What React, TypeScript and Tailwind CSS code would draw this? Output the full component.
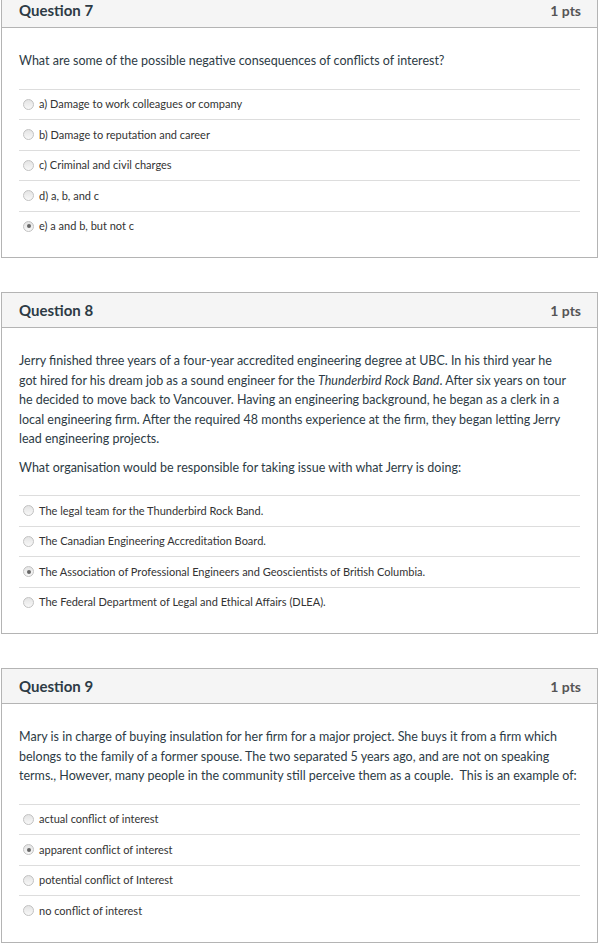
import React from 'react';

interface Question {
  id: number;
  title: string;
  points: string;
  paragraphs: React.ReactNode[];
  answers: string[];
  selected: number;
}

const questions: Question[] = [
  {
    id: 7,
    title: 'Question 7',
    points: '1 pts',
    paragraphs: ['What are some of the possible negative consequences of conflicts of interest?'],
    answers: [
      'a) Damage to work colleagues or company',
      'b) Damage to reputation and career',
      'c) Criminal and civil charges',
      'd) a, b, and c',
      'e) a and b, but not c',
    ],
    selected: 4,
  },
  {
    id: 8,
    title: 'Question 8',
    points: '1 pts',
    paragraphs: [
      <>
        Jerry finished three years of a four-year accredited engineering degree at UBC. In his third year he
        <br />
        got hired for his dream job as a sound engineer for the <em>Thunderbird Rock Band</em>. After six years on tour
        <br />
        he decided to move back to Vancouver. Having an engineering background, he began as a clerk in a
        <br />
        local engineering firm. After the required 48 months experience at the firm, they began letting Jerry
        <br />
        lead engineering projects.
      </>,
      'What organisation would be responsible for taking issue with what Jerry is doing:',
    ],
    answers: [
      'The legal team for the Thunderbird Rock Band.',
      'The Canadian Engineering Accreditation Board.',
      'The Association of Professional Engineers and Geoscientists of British Columbia.',
      'The Federal Department of Legal and Ethical Affairs (DLEA).',
    ],
    selected: 2,
  },
  {
    id: 9,
    title: 'Question 9',
    points: '1 pts',
    paragraphs: [
      'Mary is in charge of buying insulation for her firm for a major project. She buys it from a firm which belongs to the family of a former spouse. The two separated 5 years ago, and are not on speaking terms., However, many people in the community still perceive them as a couple.\u00a0 This is an example of:',
    ],
    answers: [
      'actual conflict of interest',
      'apparent conflict of interest',
      'potential conflict of Interest',
      'no conflict of interest',
    ],
    selected: 1,
  },
];

const Radio: React.FC<{ checked: boolean }> = ({ checked }) => (
  <span className="flex h-[11px] w-[11px] shrink-0 items-center justify-center rounded-full border border-[#c2c2c2] bg-gradient-to-b from-[#e4e4e4] to-[#f8f8f8]">
    {checked && <span className="h-[4px] w-[4px] rounded-full bg-[#666]" />}
  </span>
);

const QuestionCard: React.FC<{ q: Question }> = ({ q }) => (
  <div className="border border-[#b4b4b4] bg-white">
    <div className="flex h-[35px] items-center justify-between border-b border-[#b4b4b4] bg-[#f5f5f5] pl-[17px] pr-[16px]">
      <h2 className="text-[15px] font-bold text-[#2d3b45]">{q.title}</h2>
      <span className="text-[14px] font-bold text-[#555]">{q.points}</span>
    </div>
    <div className="px-[17px] pb-[16px] pt-[23px]">
      <div className="flex flex-col gap-[9px] text-[12.5px] leading-[19.5px] text-[#2d3b45]">
        {q.paragraphs.map((p, i) => (
          <p key={i}>{p}</p>
        ))}
      </div>
      <ul className="mt-[18px]">
        {q.answers.map((a, i) => (
          <li key={i} className="flex h-[30.5px] items-center gap-[5px] border-t border-[#dddddd] pl-[4px] text-[11px] text-[#333]">
            <Radio checked={i === q.selected} />
            <span>{a}</span>
          </li>
        ))}
      </ul>
    </div>
  </div>
);

export default function App() {
  return (
    <div className="min-h-[945px] bg-white font-['Lato','Liberation_Sans',sans-serif]">
      <div className="mt-[-8px] ml-px flex w-[597px] flex-col gap-[34px]">
        {questions.map((q) => (
          <QuestionCard key={q.id} q={q} />
        ))}
      </div>
    </div>
  );
}
